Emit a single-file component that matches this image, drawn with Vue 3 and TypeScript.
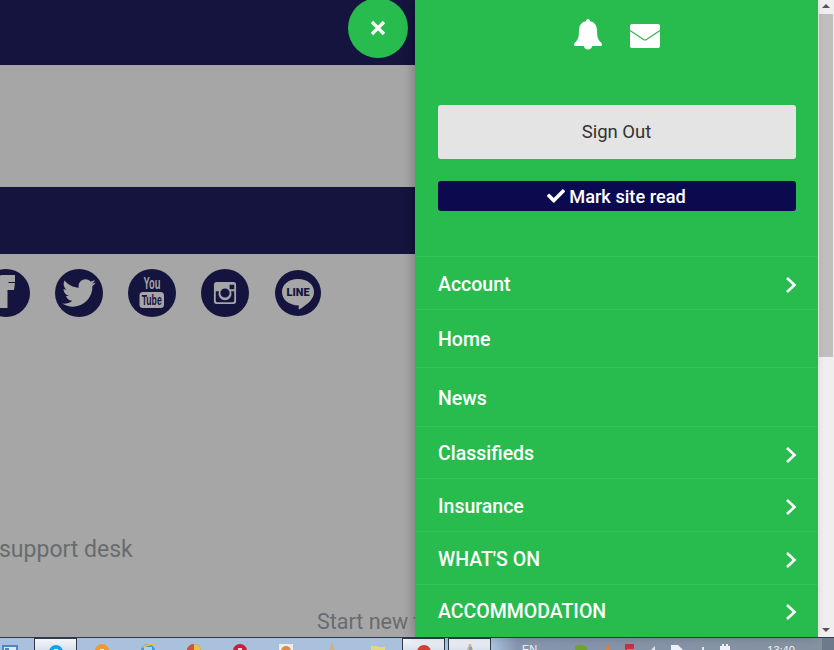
<script setup lang="ts">
interface MenuItem {
  label: string;
  height: number;
  arrow: boolean;
}

interface IconPart {
  d: string;
  fill: string;
}

const menu: MenuItem[] = [
  { label: 'Account', height: 53, arrow: true },
  { label: 'Home', height: 58, arrow: false },
  { label: 'News', height: 59, arrow: false },
  { label: 'Classifieds', height: 52, arrow: true },
  { label: 'Insurance', height: 53, arrow: true },
  { label: "WHAT'S ON", height: 53, arrow: true },
  { label: 'ACCOMMODATION', height: 51, arrow: true }
];

const disc = 'M8 2a7 7 0 1 1 0 14a7 7 0 1 1 0-14z';

// taskbar buttons, only the top few pixels of each show
const apps: IconPart[][] = [
  [
    { d: 'M0 3h16v10H0z', fill: '#4f86c6' },
    { d: 'M2 5h12v8H2z', fill: '#dce8f5' },
    { d: 'M3 6h4v3H3z', fill: '#4f86c6' }
  ],
  [
    { d: disc, fill: '#12a5e8' },
    { d: 'M6 6h4v2H6z', fill: '#e8f4fb' }
  ],
  [
    { d: disc, fill: '#ef9a2d' },
    { d: 'M6 7h4v4H6z', fill: '#fdf0dc' }
  ],
  [
    { d: disc, fill: '#3f9bd8' },
    { d: 'M4 5h8v5H4z', fill: '#b5cfe6' },
    { d: 'M2 5Q9 0 15 2L14 4Q9 2 4 6z', fill: '#e8c53c' }
  ],
  [
    { d: disc, fill: '#3f7fd0' },
    { d: 'M8 2a7 7 0 0 0-7 7h7z', fill: '#d8503c' },
    { d: 'M8 2a7 7 0 0 1 7 7H8z', fill: '#eec23c' }
  ],
  [
    { d: disc, fill: '#c4203a' },
    { d: 'M6 6h4v4H6z', fill: '#f4d9dd' }
  ],
  [
    { d: 'M1 2h14v14H1z', fill: '#e8edf3' },
    { d: 'M8 4a5 5 0 1 1 0 10a5 5 0 1 1 0-10z', fill: '#e58a35' }
  ],
  [{ d: 'M8 0l2.500 7v9h-5V7z', fill: '#c7b48a' }],
  [{ d: 'M1 4h6l1 1h7v11H1z', fill: '#e6d67c' }],
  [
    { d: disc, fill: '#d2402f' },
    { d: 'M5 7h6v6H5z', fill: '#f4e4e2' }
  ],
  [
    { d: 'M7 1h2l2 6h5v3H2V7h3z', fill: '#d8b98c' },
    { d: 'M7 4h3v12H7z', fill: '#6ea7dc' }
  ]
];

const tray: IconPart[] = [
  { d: 'M2 3Q8 0 14 4V16H2z', fill: '#6da32e' },
  { d: 'M12 1V16H2z', fill: '#e2812c' },
  { d: 'M4 1h9v5H6v10H4z', fill: '#c8323a' },
  { d: 'M3 7h3l4-4v13H3z', fill: '#dfe5ec' },
  { d: 'M2 2h7l5 5v9H2z', fill: '#eef2f6' },
  { d: 'M9 4h2v12H3v-3l6-3z', fill: '#e3e8ee' },
  { d: 'M3 3h2V1h2v2h2V1h2v2h2v13H3z', fill: '#eef2f6' }
];
</script>

<template>
  <div class="screen">
    <div class="window">
      <div class="page">
        <div class="band top-band"></div>
        <div class="gap-one"></div>
        <div class="band mid-band"></div>
        <div class="socials">
          <div class="social">
            <svg viewBox="0 0 48 48"><path d="M15 39V21H9v-7h6v-3c0-4 3-5 7-5h11v7h-5c-2 0-2.500 1-2.500 2.500V14H33l-1 7h-6.500v18z" /></svg>
          </div>
          <div class="social">
            <svg viewBox="-110 -110 732 732"><path d="M459.37 151.716c.325 4.548.325 9.097.325 13.645 0 138.72-105.583 298.558-298.558 298.558-59.452 0-114.68-17.219-161.137-47.106 8.447.974 16.568 1.299 25.34 1.299 49.055 0 94.213-16.568 130.274-44.832-46.132-.975-84.792-31.188-98.112-72.772 6.498.974 12.995 1.624 19.818 1.624 9.421 0 18.843-1.3 27.614-3.573-48.081-9.747-84.143-51.98-84.143-102.985v-1.299c13.969 7.797 30.214 12.67 47.431 13.319-28.264-18.843-46.781-51.005-46.781-87.391 0-19.492 5.197-37.36 14.294-52.954 51.655 63.675 129.3 105.258 216.365 109.807-1.624-7.797-2.599-15.918-2.599-24.04 0-57.828 46.782-104.934 104.934-104.934 30.213 0 57.502 12.67 76.67 33.137 23.715-4.548 46.456-13.32 66.599-25.34-7.798 24.366-24.366 44.833-46.132 57.827 21.117-2.273 41.584-8.122 60.426-16.243-14.292 20.791-32.161 39.308-52.628 54.253z" /></svg>
          </div>
          <div class="social">
            <svg viewBox="0 0 48 48">
              <text x="24" y="20" class="yt-you" textLength="17" lengthAdjust="spacingAndGlyphs">You</text>
              <rect x="11.500" y="23" width="24.500" height="16" rx="3.500" />
              <text x="23.700" y="36" class="yt-tube" textLength="20" lengthAdjust="spacingAndGlyphs">Tube</text>
            </svg>
          </div>
          <div class="social">
            <svg viewBox="-2 -2 52 52">
              <path fill-rule="evenodd" d="M15 12h18a3 3 0 0 1 3 3v18a3 3 0 0 1-3 3H15a3 3 0 0 1-3-3V15a3 3 0 0 1 3-3zm14 3v5h5v-5zM14 22v10a2 2 0 0 0 2 2h16a2 2 0 0 0 2-2V22h-3.600a7 7 0 1 1-12.800 0zm10-3a5 5 0 1 0 0 10a5 5 0 0 0 0-10z" />
            </svg>
          </div>
          <div class="social line">
            <svg viewBox="1 1 46 46">
              <path d="M24 10c9.400 0 16 5.400 16 13 0 7.500-6.500 12-14 17-1.300.8-1.600.2-1.400-1l.3-2.400C14.500 36 8 30.500 8 23 8 15.400 14.600 10 24 10z" />
              <text x="24" y="27" class="line-word" textLength="23" lengthAdjust="spacingAndGlyphs">LINE</text>
            </svg>
          </div>
        </div>
        <p class="support">support desk</p>
        <p class="start">Start new topic</p>
      </div>

      <button class="close" type="button" aria-label="Close menu">
        <svg viewBox="0 0 16 16"><path d="M2 2l12 12M14 2L2 14" /></svg>
      </button>

      <aside class="panel">
        <div class="alerts">
          <svg class="bell" viewBox="0 0 28 31"><path d="M14 0c1.300 0 2 1 2 2.200C21.500 3.300 23 7.500 23 12c0 5 1 8.500 3 10.500 1 1 2 2 2 3 0 .8-.6 1.500-1.500 1.500H18c0 2.200-1.800 3.500-4 3.500s-4-1.300-4-3.500H1.500C.6 27 0 26.300 0 25.500c0-1 1-2 2-3C4 20.500 5 17 5 12 5 7.500 6.500 3.300 12 2.200 12 1 12.700 0 14 0z" /></svg>
          <svg class="mail" viewBox="0 0 30 24">
            <rect width="30" height="24" rx="2" />
            <path class="mail-fold" d="M0 6.500L13.500 15.500Q15 16.500 16.500 15.500L30 6.500" />
          </svg>
        </div>
        <button class="sign-out" type="button">Sign Out</button>
        <button class="mark-read" type="button">
          <svg viewBox="0 0 512 512"><path d="M173.898 439.404l-166.400-166.400c-9.997-9.997-9.997-26.206 0-36.204l36.203-36.204c9.997-9.998 26.207-9.998 36.204 0L192 312.690 432.095 72.596c9.997-9.997 26.207-9.997 36.204 0l36.203 36.204c9.997 9.997 9.997 26.206 0 36.204l-294.400 294.401c-9.998 9.997-26.207 9.997-36.204-.001z" /></svg>
          Mark site read
        </button>
        <nav class="menu">
          <a v-for="item in menu" :key="item.label" class="menu-item" :style="{ height: item.height + 'px' }">
            <span>{{ item.label }}</span>
            <svg v-if="item.arrow" class="chevron" viewBox="0 0 12 18"><path d="M2 2l7.500 7L2 16" /></svg>
          </a>
        </nav>
      </aside>

      <div class="scrollbar">
        <span class="arrow up"></span>
        <span class="thumb"></span>
        <span class="arrow down"></span>
      </div>
    </div>

    <footer class="taskbar">
      <div class="apps">
        <div v-for="(app, i) in apps" :key="i" class="app" :class="{ active: i === 1 || i === 9 || i === 10 }">
          <svg class="app-icon" viewBox="0 0 16 16">
            <path v-for="part in app" :key="part.d" :d="part.d" :fill="part.fill" />
          </svg>
        </div>
      </div>
      <span class="lang">EN</span>
      <div class="tray">
        <svg v-for="icon in tray" :key="icon.d" class="tray-icon" viewBox="0 0 16 16">
          <path :d="icon.d" :fill="icon.fill" />
        </svg>
      </div>
      <span class="clock">13:40</span>
      <span class="show-desktop"></span>
    </footer>
  </div>
</template>

<style>
html,
body {
  margin: 0;
  overflow: hidden;
}
</style>

<style scoped>
.screen {
  width: 834px;
  height: 650px;
  display: flex;
  flex-direction: column;
  overflow: hidden;
  font-family: Roboto, "Liberation Sans", sans-serif;
}

.window {
  position: relative;
  height: 637px;
  display: flex;
  flex: none;
}

.page {
  width: 415px;
  flex: none;
  overflow: hidden;
  background: #a6a6a6;
  white-space: nowrap;
}

.band {
  background: #14143f;
}

.top-band {
  height: 65px;
}

.gap-one {
  height: 122px;
}

.mid-band {
  height: 67px;
}

.socials {
  display: flex;
  gap: 25px;
  margin: 15px 0 0 -18px;
}

.social {
  width: 48px;
  height: 48px;
  flex: none;
  border-radius: 50%;
  background: #14143f;
}

.social svg {
  display: block;
  width: 100%;
  height: 100%;
  fill: #a6a6a6;
}

.social.line {
  width: 46px;
  height: 46px;
  margin: 1px;
}

.yt-you,
.yt-tube,
.line-word {
  font-family: "Liberation Sans", sans-serif;
  text-anchor: middle;
  font-weight: 700;
}

.yt-you {
  font-size: 16px;
}

.yt-tube {
  font-size: 15px;
  fill: #14143f;
}

.line-word {
  font-family: Roboto, sans-serif;
  font-size: 11px;
  font-weight: 900;
  fill: #14143f;
}

.support,
.start {
  margin: 0;
  line-height: 30px;
  color: #686c6e;
}

.support {
  margin: 218px 0 0 -1px;
  font-size: 23px;
}

.start {
  margin: 42px 0 0 317px;
  font-size: 21.500px;
}

.close {
  position: absolute;
  left: 348px;
  top: -2px;
  width: 60px;
  height: 60px;
  padding: 0 1px 1px 0;
  border: 0;
  border-radius: 50%;
  background: #28bc4e;
  display: flex;
  align-items: center;
  justify-content: center;
}

.close svg {
  width: 16px;
  height: 16px;
  fill: none;
  stroke: #fff;
  stroke-width: 3.200;
}

.panel {
  position: relative;
  width: 403px;
  flex: none;
  overflow: hidden;
  background: #28bc4e;
  box-shadow: -3px 0 9px rgba(0, 0, 0, 0.22);
  display: flex;
  flex-direction: column;
  align-items: center;
}

.alerts {
  height: 105px;
  display: flex;
  gap: 28px;
  padding-top: 19px;
  box-sizing: border-box;
  align-items: flex-start;
}

.alerts svg {
  fill: #fff;
  display: block;
}

.bell {
  width: 28px;
  height: 31px;
}

.mail {
  width: 30px;
  height: 24px;
  margin-top: 5px;
}

.mail-fold {
  fill: none;
  stroke: #28bc4e;
  stroke-width: 1.200;
}

.sign-out,
.mark-read {
  width: 358px;
  flex: none;
  border: 0;
  font-family: inherit;
}

.sign-out {
  height: 54px;
  padding: 0 0 1px;
  border-radius: 3px;
  background: #e4e4e4;
  color: #333;
  font-size: 18.500px;
}

.mark-read {
  height: 30px;
  margin-top: 22px;
  padding: 0;
  border-radius: 3px;
  background: #0c0a4f;
  color: #fff;
  font-size: 18.200px;
  font-weight: 500;
  display: flex;
  align-items: center;
  justify-content: center;
  gap: 4px;
}

.mark-read svg {
  width: 18px;
  height: 18px;
  fill: #fff;
}

.menu {
  width: 100%;
  margin-top: 45px;
}

.menu-item {
  box-sizing: border-box;
  display: flex;
  align-items: center;
  justify-content: space-between;
  padding: 2px 21px 0 23px;
  border-top: 1px solid #2ec456;
  color: #fff;
  font-size: 19.500px;
  font-weight: 500;
}

.chevron {
  width: 12px;
  height: 18px;
  margin-top: 2px;
  fill: none;
  stroke: #fff;
  stroke-width: 2.600;
}

.scrollbar {
  width: 16px;
  flex: none;
  background: #f0eeee;
  display: flex;
  flex-direction: column;
  align-items: center;
}

.arrow {
  width: 0;
  height: 0;
  flex: none;
  border-left: 4px solid transparent;
  border-right: 4px solid transparent;
}

.arrow.up {
  margin-top: 4px;
  border-bottom: 4px solid #555;
}

.arrow.down {
  margin-top: auto;
  margin-bottom: 5px;
  border-top: 4px solid #555;
}

.thumb {
  width: 14px;
  height: 343px;
  margin-top: 6px;
  background: #c1bebe;
}

.taskbar {
  height: 13px;
  flex: none;
  display: flex;
  align-items: flex-start;
  overflow: hidden;
  border-top: 1px solid #2d3a4c;
  box-sizing: border-box;
  background: linear-gradient(90deg, #a9c1dd 0%, #a9c1dd 59%, #8595ad 62%, #84919f 100%);
}

.apps {
  display: flex;
  width: 506px;
  margin-left: -12px;
  flex: none;
}

.app {
  width: 43px;
  height: 13px;
  flex: none;
  box-sizing: border-box;
  display: flex;
  justify-content: center;
  margin-right: 3px;
}

.app.active {
  background: linear-gradient(#f4f6f9, #d6e0ee);
  border: 1px solid #2d3a4c;
  border-bottom: 0;
}

.app-icon {
  width: 16px;
  height: 16px;
  flex: none;
  margin-top: 4px;
}

.lang {
  margin: 5px 0 0 28px;
  font-family: "Liberation Sans", sans-serif;
  font-size: 11px;
  color: #f2f4f7;
}

.tray {
  display: flex;
  gap: 8px;
  margin-left: 36px;
}

.tray-icon {
  width: 16px;
  height: 16px;
  flex: none;
  margin-top: 5px;
}

.clock {
  margin: 6px 0 0 34px;
  font-family: "Liberation Sans", sans-serif;
  font-size: 11px;
  color: #f2f4f7;
}

.show-desktop {
  width: 12px;
  height: 13px;
  flex: none;
  margin-left: auto;
  background: #6c7a8c;
}
</style>
